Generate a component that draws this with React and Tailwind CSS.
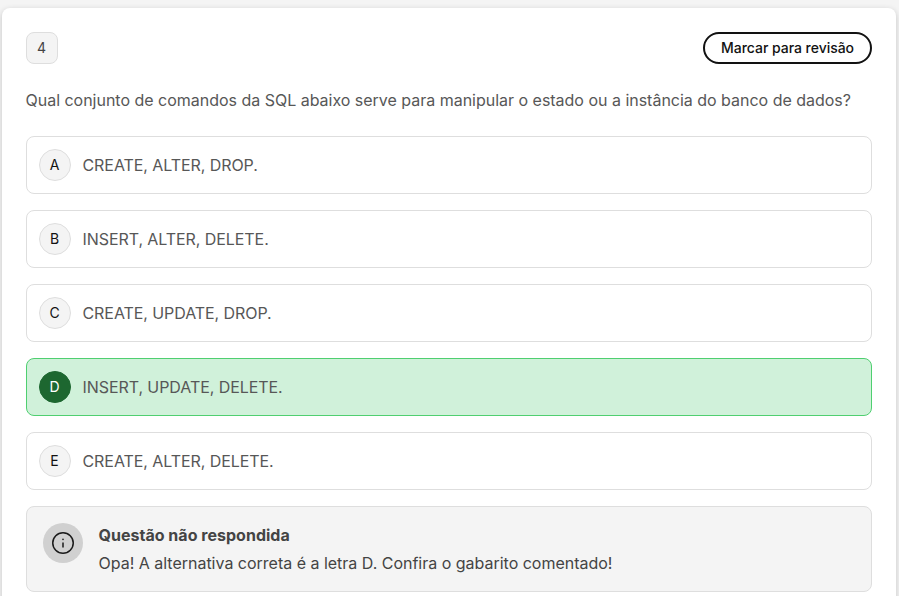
const alternatives = [
  { letter: "A", text: "CREATE, ALTER, DROP." },
  { letter: "B", text: "INSERT, ALTER, DELETE." },
  { letter: "C", text: "CREATE, UPDATE, DROP." },
  { letter: "D", text: "INSERT, UPDATE, DELETE.", correct: true },
  { letter: "E", text: "CREATE, ALTER, DELETE." },
];

function InfoIcon() {
  return (
    <svg className="size-6" viewBox="0 0 24 24" fill="none" stroke="#1a1a1a" strokeWidth="1.5">
      <circle cx="12" cy="12" r="10.25" />
      <path d="M12 11.5v5" />
      <circle cx="12" cy="8.4" r="0.8" fill="#1a1a1a" stroke="none" />
    </svg>
  );
}

function Alternative({ letter, text, correct }) {
  return (
    <li
      className={`flex h-[58px] items-center gap-3 rounded-lg border pl-3 ${
        correct ? "border-[#4fcf70] bg-[#d0f1da]" : "border-[#dedede] bg-white"
      }`}
    >
      <span
        className={`flex size-8 items-center justify-center rounded-full border pr-px text-sm ${
          correct
            ? "border-[#1d6730] bg-[#1d6730] text-white"
            : "border-[#dedede] bg-[#f4f4f4] text-[#121212]"
        }`}
      >
        {letter}
      </span>
      <span className="-ml-[0.5px] text-base tracking-[-0.07px] text-[#575757]">{text}</span>
    </li>
  );
}

export default function App() {
  return (
    <div className="h-[596px] overflow-hidden bg-[#f4f4f4] pl-0.5 pr-[3px] pt-2 font-['Inter',sans-serif]">
      <div className="h-[640px] rounded-lg bg-white px-6 pt-6 shadow-[0_2px_6px_rgba(0,0,0,0.2)]">
        {/* HEADER */}
        <div className="flex items-center justify-between">
          <span className="flex size-8 items-center justify-center rounded-lg border border-[#dedede] bg-[#f4f4f4] pr-px text-sm text-[#444444]">
            4
          </span>
          <button className="h-8 w-[169px] rounded-full border-2 border-[#121212] text-sm font-medium tracking-[-0.03px] text-[#121212]">
            Marcar para revisão
          </button>
        </div>

        <p className="-ml-[0.5px] mt-6 whitespace-nowrap text-base tracking-[-0.015px] text-[#575757]">
          Qual conjunto de comandos da SQL abaixo serve para manipular o estado ou a instância do banco de dados?
        </p>

        {/* ALTERNATIVES */}
        <ul className="mt-6 flex flex-col gap-4">
          {alternatives.map((item) => (
            <Alternative key={item.letter} {...item} />
          ))}
        </ul>

        {/* FEEDBACK */}
        <div className="mt-4 flex h-[86px] gap-4 rounded-lg border border-[#dedede] bg-[#f4f4f4] p-4">
          <div className="flex size-10 shrink-0 items-center justify-center rounded-full bg-[#d0d0d0]">
            <InfoIcon />
          </div>
          <div className="-ml-[0.5px] text-base text-[#444444]">
            <h2 className="font-bold tracking-[0.02px]">Questão não respondida</h2>
            <p className="mt-1 tracking-[-0.01px]">Opa! A alternativa correta é a letra D. Confira o gabarito comentado!</p>
          </div>
        </div>
      </div>
    </div>
  );
}
